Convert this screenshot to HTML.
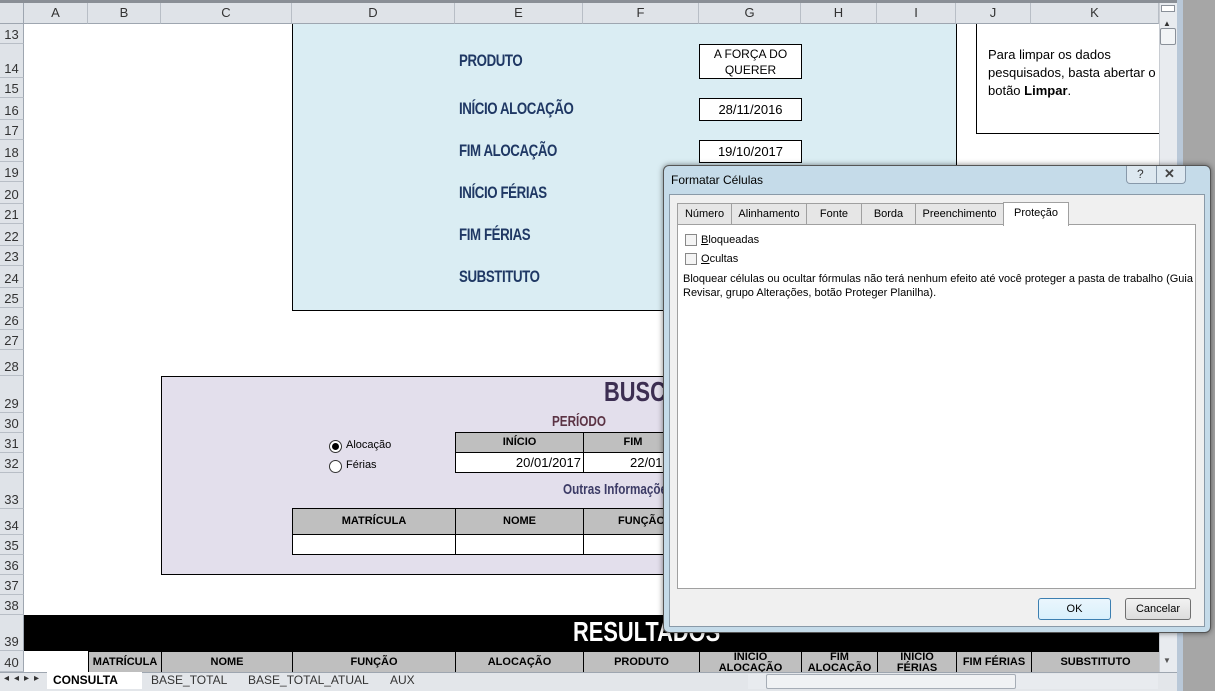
<!DOCTYPE html>
<html><head><meta charset="utf-8"><style>
*{margin:0;padding:0;box-sizing:border-box}
body{width:1215px;height:691px;overflow:hidden;background:#fff;font-family:"Liberation Sans",sans-serif;position:relative}
.a{position:absolute}
.ch{position:absolute;top:3px;height:21px;background:#dfe3e8;border-right:1px solid #b8bec6;border-bottom:1px solid #9ea6b0;font-size:13px;color:#333;text-align:center;line-height:20px}
.rh{position:absolute;left:0;width:24px;background:#dfe3e8;border-bottom:1px solid #b8bec6;border-right:1px solid #9ea6b0;font-size:13px;color:#333;text-align:center;display:flex;align-items:flex-end;justify-content:center;padding-bottom:1px}
.lbl{position:absolute;left:459px;font-weight:bold;font-size:17px;color:#1f3864;letter-spacing:-0.5px;transform:scaleX(.78);transform-origin:left}
.box{position:absolute;left:699px;width:103px;border:1px solid #000;background:#fff;font-size:13px;text-align:center;color:#000}
.th{position:absolute;background:#bfbfbf;border:1px solid #000;font-weight:bold;font-size:11px;text-align:center;color:#000}
.td{position:absolute;background:#fff;border:1px solid #000;font-size:13px}
.tab{position:absolute;top:203px;height:22px;background:#e6e6e6;border:1px solid #a0a0a0;font-size:11px;line-height:21px;text-align:center;color:#000}
</style></head><body>
<div class="a" style="left:0;top:0;width:1177px;height:3px;background:#8a8f96"></div>
<div class="a" style="left:0;top:3px;width:24px;height:21px;background:#dfe3e8;border-right:1px solid #9ea6b0;border-bottom:1px solid #9ea6b0"></div>
<div class="ch" style="left:24px;width:64px">A</div>
<div class="ch" style="left:88px;width:73px">B</div>
<div class="ch" style="left:161px;width:131px">C</div>
<div class="ch" style="left:292px;width:163px">D</div>
<div class="ch" style="left:455px;width:128px">E</div>
<div class="ch" style="left:583px;width:116px">F</div>
<div class="ch" style="left:699px;width:102px">G</div>
<div class="ch" style="left:801px;width:76px">H</div>
<div class="ch" style="left:877px;width:79px">I</div>
<div class="ch" style="left:956px;width:75px">J</div>
<div class="ch" style="left:1031px;width:128px">K</div>
<div class="rh" style="top:24px;height:20px">13</div>
<div class="rh" style="top:44px;height:34px">14</div>
<div class="rh" style="top:78px;height:20px">15</div>
<div class="rh" style="top:98px;height:22px">16</div>
<div class="rh" style="top:120px;height:20px">17</div>
<div class="rh" style="top:140px;height:22px">18</div>
<div class="rh" style="top:162px;height:20px">19</div>
<div class="rh" style="top:182px;height:22px">20</div>
<div class="rh" style="top:204px;height:20px">21</div>
<div class="rh" style="top:224px;height:22px">22</div>
<div class="rh" style="top:246px;height:20px">23</div>
<div class="rh" style="top:266px;height:22px">24</div>
<div class="rh" style="top:288px;height:20px">25</div>
<div class="rh" style="top:308px;height:22px">26</div>
<div class="rh" style="top:330px;height:20px">27</div>
<div class="rh" style="top:350px;height:26px">28</div>
<div class="rh" style="top:376px;height:37px">29</div>
<div class="rh" style="top:413px;height:20px">30</div>
<div class="rh" style="top:433px;height:20px">31</div>
<div class="rh" style="top:453px;height:20px">32</div>
<div class="rh" style="top:473px;height:36px">33</div>
<div class="rh" style="top:509px;height:26px">34</div>
<div class="rh" style="top:535px;height:20px">35</div>
<div class="rh" style="top:555px;height:20px">36</div>
<div class="rh" style="top:575px;height:20px">37</div>
<div class="rh" style="top:595px;height:20px">38</div>
<div class="rh" style="top:615px;height:36px">39</div>
<div class="rh" style="top:651px;height:21px">40</div>

<div class="a" style="left:292px;top:24px;width:665px;height:287px;background:#daedf3;border-left:1px solid #000;border-bottom:1px solid #000;border-right:1px solid #000"></div>
<div class="lbl" style="top:51px">PRODUTO</div>
<div class="lbl" style="top:99px">INÍCIO ALOCAÇÃO</div>
<div class="lbl" style="top:141px">FIM ALOCAÇÃO</div>
<div class="lbl" style="top:183px">INÍCIO FÉRIAS</div>
<div class="lbl" style="top:225px">FIM FÉRIAS</div>
<div class="lbl" style="top:267px">SUBSTITUTO</div>
<div class="box" style="top:44px;height:35px;line-height:16px;padding-top:1px;font-size:12px">A FORÇA DO<br>QUERER</div>
<div class="box" style="top:98px;height:23px;line-height:21px">28/11/2016</div>
<div class="box" style="top:140px;height:23px;line-height:21px">19/10/2017</div>
<div class="a" style="left:976px;top:24px;width:184px;height:110px;border-left:1px solid #000;border-bottom:1px solid #000;background:#fff;font-size:13px;line-height:18px;padding:22px 0 0 11px;color:#000;overflow:hidden">Para limpar os dados pesquisados, basta abertar o botão <b>Limpar</b>.</div>

<div class="a" style="left:161px;top:376px;width:520px;height:199px;background:#e3dfec;border:1px solid #000"></div>
<div class="a" style="left:604px;top:376px;font-weight:bold;font-size:28px;color:#3c2e52;transform:scaleX(.78);transform-origin:left">BUSCA</div>
<div class="a" style="left:552px;top:413px;font-weight:bold;font-size:15px;color:#5b3344;transform:scaleX(.78);transform-origin:left">PERÍODO</div>
<div class="a" style="left:563px;top:481px;font-weight:bold;font-size:15px;color:#3c3b66;transform:scaleX(.78);transform-origin:left">Outras Informações</div>
<div class="a" style="left:329px;top:440px;width:13px;height:13px;border:1px solid #333;border-radius:50%;background:#fff"><div style="margin:2px;width:7px;height:7px;border-radius:50%;background:#000"></div></div>
<div class="a" style="left:346px;top:439px;font-size:11px">Alocação</div>
<div class="a" style="left:329px;top:460px;width:13px;height:13px;border:1px solid #333;border-radius:50%;background:#fff"></div>
<div class="a" style="left:346px;top:459px;font-size:11px">Férias</div>
<div class="th" style="left:455px;top:432px;width:129px;height:21px;line-height:19px">INÍCIO</div>
<div class="th" style="left:583px;top:432px;width:100px;height:21px;line-height:19px">FIM</div>
<div class="td" style="left:455px;top:452px;width:129px;height:21px;text-align:right;padding-right:2px;line-height:19px">20/01/2017</div>
<div class="td" style="left:583px;top:452px;width:100px;height:21px;padding-left:46px;line-height:19px">22/01</div>
<div class="th" style="left:292px;top:508px;width:164px;height:27px;line-height:25px">MATRÍCULA</div>
<div class="th" style="left:455px;top:508px;width:129px;height:27px;line-height:25px">NOME</div>
<div class="th" style="left:583px;top:508px;width:100px;height:27px;line-height:25px;text-align:left;padding-left:34px">FUNÇÃO</div>
<div class="td" style="left:292px;top:534px;width:164px;height:21px"></div>
<div class="td" style="left:455px;top:534px;width:129px;height:21px"></div>
<div class="td" style="left:583px;top:534px;width:100px;height:21px"></div>

<div class="a" style="left:24px;top:615px;width:1136px;height:36px;background:#000"></div>
<div class="a" style="left:573px;top:616px;font-weight:bold;font-size:28px;color:#fff;transform:scaleX(.78);transform-origin:left">RESULTADOS</div>
<div class="a" style="left:24px;top:651px;width:1136px;height:21px;background:#fff"></div>
<div class="th" style="left:88px;top:651px;width:74px;height:22px;line-height:20px">MATRÍCULA</div>
<div class="th" style="left:161px;top:651px;width:132px;height:22px;line-height:20px">NOME</div>
<div class="th" style="left:292px;top:651px;width:164px;height:22px;line-height:20px">FUNÇÃO</div>
<div class="th" style="left:455px;top:651px;width:129px;height:22px;line-height:20px">ALOCAÇÃO</div>
<div class="th" style="left:583px;top:651px;width:117px;height:22px;line-height:20px">PRODUTO</div>
<div class="th" style="left:699px;top:651px;width:103px;height:22px;line-height:11px;overflow:hidden">INÍCIO<br>ALOCAÇÃO</div>
<div class="th" style="left:801px;top:651px;width:77px;height:22px;line-height:11px;overflow:hidden">FIM<br>ALOCAÇÃO</div>
<div class="th" style="left:877px;top:651px;width:80px;height:22px;line-height:11px;overflow:hidden">INÍCIO<br>FÉRIAS</div>
<div class="th" style="left:956px;top:651px;width:76px;height:22px;line-height:20px">FIM FÉRIAS</div>
<div class="th" style="left:1031px;top:651px;width:129px;height:22px;line-height:20px">SUBSTITUTO</div>

<div class="a" style="left:1159px;top:3px;width:18px;height:669px;background:#e8ebef;border-left:1px solid #c8ccd2"></div>
<div class="a" style="left:1161px;top:5px;width:14px;height:7px;border:1px solid #8a9099;background:#fff"></div>
<div class="a" style="left:1163px;top:19px;font-size:8px;color:#333">▲</div>
<div class="a" style="left:1160px;top:28px;width:16px;height:17px;border:1px solid #8a9099;border-radius:2px;background:#f2f4f6"></div>
<div class="a" style="left:1163px;top:656px;font-size:8px;color:#555">▼</div>
<div class="a" style="left:1177px;top:0;width:6px;height:691px;background:#b9c8d8"></div>
<div class="a" style="left:1183px;top:0;width:32px;height:691px;background:#a6a6a6"></div>

<div class="a" style="left:0;top:672px;width:1177px;height:19px;background:#e3e6ea;border-top:1px solid #9ea6b0"></div>
<div class="a" style="left:4px;top:673px;font-size:10px;color:#333;letter-spacing:5px">◂◂▸▸</div>
<div class="a" style="left:47px;top:672px;width:95px;height:17px;background:#fff"></div>
<div class="a" style="left:53px;top:673px;font-size:12px;font-weight:bold;color:#000">CONSULTA</div>
<div class="a" style="left:151px;top:673px;font-size:12px;color:#333">BASE_TOTAL</div>
<div class="a" style="left:248px;top:673px;font-size:12px;color:#333">BASE_TOTAL_ATUAL</div>
<div class="a" style="left:390px;top:673px;font-size:12px;color:#333">AUX</div>
<div class="a" style="left:748px;top:674px;width:410px;height:15px;background:#e8ebef"></div>
<div class="a" style="left:766px;top:674px;width:250px;height:15px;border:1px solid #a6adb6;border-radius:2px;background:#f0f2f4"></div>

<div class="a" style="left:663px;top:165px;width:548px;height:468px;background:#c5dbe9;border:1px solid #555;border-radius:6px;box-shadow:0 0 6px rgba(0,0,0,.5)"></div>
<div class="a" style="left:671px;top:173px;font-size:12px;color:#000">Formatar Células</div>
<div class="a" style="left:1126px;top:166px;width:60px;height:18px;border:1px solid #8899aa;border-top:none;border-radius:0 0 4px 4px;background:#dde8f0"></div>
<div class="a" style="left:1156px;top:166px;width:1px;height:18px;background:#8899aa"></div>
<div class="a" style="left:1137px;top:167px;font-size:12px;color:#333">?</div>
<div class="a" style="left:1164px;top:166px;font-size:13px;color:#444;font-weight:bold">✕</div>
<div class="a" style="left:669px;top:194px;width:536px;height:433px;background:#f0f0f0;border:1px solid #8a9aa8"></div>
<div class="tab" style="left:677px;width:55px">Número</div>
<div class="tab" style="left:731px;width:76px">Alinhamento</div>
<div class="tab" style="left:806px;width:56px">Fonte</div>
<div class="tab" style="left:861px;width:55px">Borda</div>
<div class="tab" style="left:915px;width:89px">Preenchimento</div>
<div class="a" style="left:677px;top:224px;width:519px;height:365px;background:#fff;border:1px solid #a0a0a0"></div>
<div class="tab" style="left:1003px;top:202px;width:66px;height:24px;background:#fff;border-bottom:none">Proteção</div>
<div class="a" style="left:685px;top:234px;width:12px;height:12px;border:1px solid #888;background:#f4f4f4"></div>
<div class="a" style="left:701px;top:234px;font-size:11px"><u>B</u>loqueadas</div>
<div class="a" style="left:685px;top:253px;width:12px;height:12px;border:1px solid #888;background:#f4f4f4"></div>
<div class="a" style="left:701px;top:253px;font-size:11px"><u>O</u>cultas</div>
<div class="a" style="left:683px;top:272px;width:510px;font-size:11px;line-height:14px;color:#000">Bloquear células ou ocultar fórmulas não terá nenhum efeito até você proteger a pasta de trabalho (Guia Revisar, grupo Alterações, botão Proteger Planilha).</div>
<div class="a" style="left:1038px;top:598px;width:73px;height:22px;border:1px solid #3c7fb1;border-radius:3px;background:linear-gradient(#eaf6fd,#d9f0fc);font-size:11px;text-align:center;line-height:20px">OK</div>
<div class="a" style="left:1125px;top:598px;width:66px;height:22px;border:1px solid #707070;border-radius:3px;background:linear-gradient(#f2f2f2,#dcdcdc);font-size:11px;text-align:center;line-height:20px">Cancelar</div>
</body></html>
